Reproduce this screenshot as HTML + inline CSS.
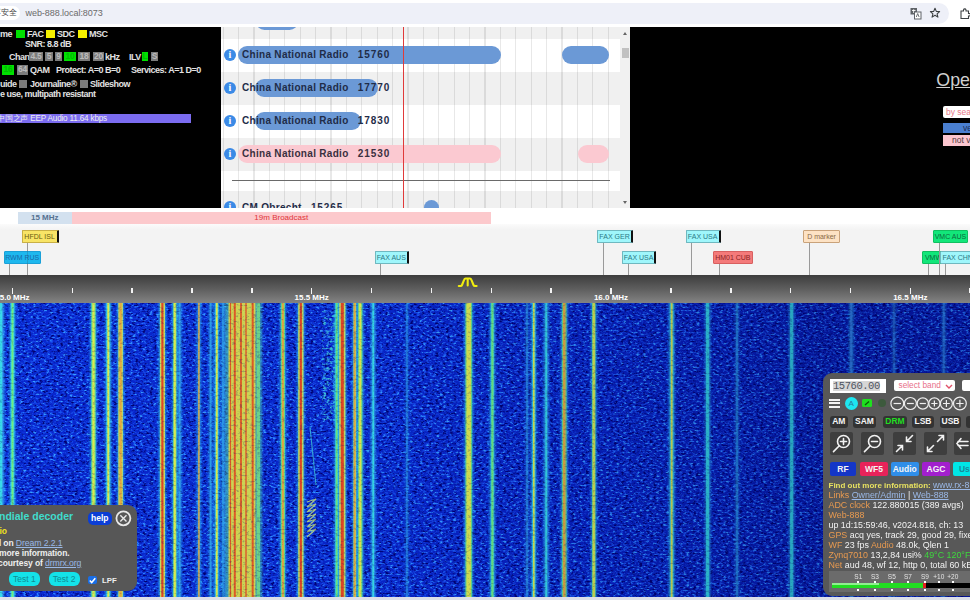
<!DOCTYPE html>
<html><head><meta charset="utf-8">
<style>
*{margin:0;padding:0;box-sizing:border-box}
html,body{width:970px;height:600px;overflow:hidden;background:#000;font-family:"Liberation Sans",sans-serif}
.a{position:absolute}
#top{left:0;top:0;width:970px;height:27px;background:#fff}
#omni{left:-20px;top:2.5px;width:969px;height:21px;background:#eef0f8;border-radius:10.5px}
#chip{left:-14px;top:5.5px;width:34px;height:14.5px;background:#fff;border-radius:7px;font-size:8px;color:#444;line-height:14.5px;text-align:right;padding-right:3.5px;white-space:nowrap}
#url{left:25.5px;top:6px;font-size:9px;color:#6a6a6a;line-height:14px;letter-spacing:-0.05px}
#blk{left:0;top:27px;width:970px;height:181px;background:#000}
.t{color:#e2e2e2;font-weight:bold;font-size:9px;line-height:9.4px;letter-spacing:-0.5px;white-space:nowrap;margin-top:.7px}
.gb{background:#00e000;color:#0b0;font-weight:bold;font-size:8.5px;line-height:9.5px;height:9.5px;letter-spacing:-0.3px}
.yb{background:#f4f000}
.gr{background:#7c7c7c;color:#bbb;font-weight:bold;font-size:8.5px;line-height:9.5px;height:9.5px;letter-spacing:-0.3px}
.c{text-align:center}
.bx{display:inline-block;background:#888;color:#ccc;padding:0 1px}
#sched{left:221px;top:27px;width:409px;height:181px;background:#fff;overflow:hidden}
.gl{top:0;width:1.3px;height:181px;background:rgba(0,0,0,0.09)}
.pl{height:17.5px;border-radius:9px}
.ic{width:12px;height:12px;border-radius:6px;background:#3b8ae6;color:#fff;font:bold 10px/12px "Liberation Serif",serif;text-align:center}
.st{font-size:10px;font-weight:bold;letter-spacing:0.3px;line-height:18.5px;color:#1f2c48;white-space:nowrap}
.lb{height:12.5px;font:7px/12px 'Liberation Sans',sans-serif;text-align:center;white-space:nowrap;overflow:hidden;border-radius:1px}
.rl{top:18.5px;width:60px;text-align:center;color:#fff;font:bold 8px/7px 'Liberation Sans',sans-serif;white-space:nowrap}
.dt{font:bold 8.5px/10px 'Liberation Sans',sans-serif;color:#eee;white-space:nowrap;letter-spacing:-0.1px}
.lk{color:#9ab8e6;text-decoration:underline;font-weight:normal}
.tb{width:31.2px;height:14px;border-radius:6px;background:#14e2e8;color:#128a92;font:8.5px/14px 'Liberation Sans',sans-serif;text-align:center}
.mb{top:416px;height:11.5px;border-radius:3px;background:#333;color:#f4f4f4;font:bold 8.5px/11.5px 'Liberation Sans',sans-serif;text-align:center}
.ib{top:432px;width:23.2px;height:23px;background:#3e3e3e;border-radius:2px}
.ib svg{display:block}
.cb{top:461.8px;height:14px;border-radius:2px;color:#f4f4f4;font:bold 8.5px/14px 'Liberation Sans',sans-serif;text-align:center;overflow:hidden}
.it{left:828.5px;font:8.9px/10px 'Liberation Sans',sans-serif;color:#f2f2f2;white-space:nowrap}
.or{color:#e89a50}
#band{left:0;top:208px;width:970px;height:16px;background:#fff}
#lab{left:0;top:224px;width:970px;height:51px;background:#f3f3f3}
#ruler{left:0;top:275px;width:970px;height:28px;background:linear-gradient(#3d3d3d,#5e5e5e 50%,#838383)}
#wf{left:0;top:303px;width:970px;height:294px;background:#1442d0}
#bot{left:0;top:597px;width:970px;height:3px;background:#dcdfe8}
</style></head><body>
<div id="top" class="a">
  <div id="omni" class="a"></div>
  <div id="chip" class="a">不安全</div>
  <svg class="a" style="left:909px;top:7px" width="14" height="13" viewBox="0 0 14 13"><rect x="1.5" y="1" width="6.5" height="6.5" fill="#5f6368"/><path d="M3 3.5 H6.5 M4.7 2.3 V6" stroke="#fff" stroke-width="0.9"/><rect x="5.5" y="5" width="6.5" height="7" fill="#fff" stroke="#5f6368" stroke-width="1"/><path d="M7.3 10 L8.7 6.5 L10.1 10" fill="none" stroke="#5f6368" stroke-width="0.9"/></svg>
  <svg class="a" style="left:929px;top:7px" width="12" height="12" viewBox="0 0 12 12"><path d="M6 1.3 L7.3 4.4 L10.6 4.6 L8.1 6.8 L8.9 10.1 L6 8.3 L3.1 10.1 L3.9 6.8 L1.4 4.6 L4.7 4.4 Z" fill="none" stroke="#3c4043" stroke-width="1.1" stroke-linejoin="round"/></svg>
  <svg class="a" style="left:959px;top:7px" width="12" height="13" viewBox="0 0 12 13"><path d="M2 4 H4.5 V2.8 A1.3 1.3 0 0 1 7 2.8 V4 H9.5 V6.5 H10.5 A1.3 1.3 0 0 1 10.5 9 H9.5 V11.5 H2 Z" fill="#fff" stroke="#3c4043" stroke-width="1.1"/></svg>
  <div id="url" class="a">web-888.local:8073</div>
</div>
<div id="blk" class="a">
<div class="a" style="left:0;top:0;width:221px;height:181px;overflow:hidden">
 <span class="a t" style="left:0;top:2px">me</span>
 <span class="a gb" style="left:16px;top:2.5px;width:9px;height:8.5px"></span>
 <span class="a t" style="left:27px;top:2px">FAC</span>
 <span class="a yb" style="left:46px;top:2.5px;width:9px;height:8.5px"></span>
 <span class="a t" style="left:57px;top:2px">SDC</span>
 <span class="a yb" style="left:78px;top:2.5px;width:9px;height:8.5px"></span>
 <span class="a t" style="left:89px;top:2px">MSC</span>
 <span class="a t" style="left:25px;top:12.5px">SNR: 8.8 dB</span>
 <span class="a t" style="left:9px;top:25px">Chan</span>
 <span class="a gr c" style="left:29px;top:24.6px;width:14px">4.5</span>
 <span class="a gr c" style="left:45px;top:24.6px;width:8px">5</span>
 <span class="a gr c" style="left:55px;top:24.6px;width:7px">9</span>
 <span class="a gb c" style="left:64px;top:24.6px;width:12px">10</span>
 <span class="a gr c" style="left:78px;top:24.6px;width:12px">18</span>
 <span class="a gr c" style="left:93px;top:24.6px;width:11px">20</span>
 <span class="a t" style="left:105px;top:25px">kHz</span>
 <span class="a t" style="left:129px;top:25px">ILV</span>
 <span class="a gb c" style="left:142px;top:24.6px;width:6px">L</span>
 <span class="a gr c" style="left:151px;top:24.6px;width:7px">S</span>
 <span class="a gb c" style="left:2px;top:38px;width:12px">16</span>
 <span class="a gr c" style="left:17px;top:38px;width:11px">64</span>
 <span class="a t" style="left:30px;top:38.7px">QAM</span>
 <span class="a t" style="left:56px;top:38.7px">Protect: A=0 B=0</span>
 <span class="a t" style="left:131px;top:38.7px">Services: A=1 D=0</span>
 <span class="a t" style="left:0;top:52.5px">uide</span>
 <span class="a gr" style="left:19px;top:53px;width:8px;height:8px"></span>
 <span class="a t" style="left:30px;top:52.5px">Journaline&reg;</span>
 <span class="a gr" style="left:80px;top:53px;width:8px;height:8px"></span>
 <span class="a t" style="left:90px;top:52.5px">Slideshow</span>
 <span class="a t" style="left:0;top:62.7px">e use, multipath resistant</span>
 <div class="a" style="left:0;top:86.5px;width:191px;height:9.5px;background:#7b6cf0"></div>
 <span class="a t" style="left:-3px;top:86.5px;font-weight:normal;color:#eee;font-size:8.2px;letter-spacing:-0.2px;line-height:10px">中国之声 EEP Audio 11.64 kbps</span>
</div>
</div>
<div class="a" style="left:936.3px;top:70.3px;font:17.8px/20px 'Liberation Sans',sans-serif;color:#cfcfcf;text-decoration:underline;white-space:nowrap">OpenWebRX</div>
<div class="a" style="left:943px;top:106px;width:40px;height:12px;background:#fff;border-radius:2px;font:8.5px/12px 'Liberation Sans',sans-serif;color:#e87a8a;padding-left:3px;white-space:nowrap">by sea</div>
<div class="a" style="left:943px;top:122.5px;width:40px;height:10.8px;background:#4a7fd0;font:8.5px/10.8px 'Liberation Sans',sans-serif;color:#1a2a50;padding-left:20px;white-space:nowrap">ve</div>
<div class="a" style="left:943px;top:135.3px;width:40px;height:10.5px;background:#fbc6cf;font:8.5px/10.5px 'Liberation Sans',sans-serif;color:#503a40;padding-left:9px;white-space:nowrap">not v</div>
<div id="sched" class="a">
<div class="a" style="left:0;top:0;width:399px;height:181px;background:#f0f0f0"></div>
<div class="a" style="left:0;top:-21.5px;width:399px;height:33.0px;background:#f0f0f0"></div>
<div class="a" style="left:0;top:11.5px;width:399px;height:33.0px;background:#fff"></div>
<div class="a" style="left:0;top:44.5px;width:399px;height:33.0px;background:#f0f0f0"></div>
<div class="a" style="left:0;top:77.5px;width:399px;height:33.0px;background:#fff"></div>
<div class="a" style="left:0;top:110.5px;width:399px;height:33.0px;background:#f0f0f0"></div>
<div class="a" style="left:0;top:143.5px;width:399px;height:20.5px;background:#fff"></div>
<div class="a" style="left:0;top:164.0px;width:399px;height:33.0px;background:#f0f0f0"></div>
<div class="a gl" style="left:1.6px"></div>
<div class="a gl" style="left:17.0px"></div>
<div class="a gl" style="left:32.4px"></div>
<div class="a gl" style="left:47.8px"></div>
<div class="a gl" style="left:63.2px"></div>
<div class="a gl" style="left:78.6px"></div>
<div class="a gl" style="left:94.0px"></div>
<div class="a gl" style="left:109.4px"></div>
<div class="a gl" style="left:124.8px"></div>
<div class="a gl" style="left:140.2px"></div>
<div class="a gl" style="left:155.6px"></div>
<div class="a gl" style="left:171.0px"></div>
<div class="a gl" style="left:186.4px"></div>
<div class="a gl" style="left:201.8px"></div>
<div class="a gl" style="left:217.2px"></div>
<div class="a gl" style="left:232.6px"></div>
<div class="a gl" style="left:248.0px"></div>
<div class="a gl" style="left:263.4px"></div>
<div class="a gl" style="left:278.8px"></div>
<div class="a gl" style="left:294.2px"></div>
<div class="a gl" style="left:309.6px"></div>
<div class="a gl" style="left:325.0px"></div>
<div class="a gl" style="left:340.4px"></div>
<div class="a gl" style="left:355.8px"></div>
<div class="a gl" style="left:371.2px"></div>
<div class="a gl" style="left:386.6px"></div>
<div class="a pl" style="left:34.5px;top:-14.5px;width:42.0px;background:#6b99d6"></div>
<div class="a pl" style="left:17.0px;top:19.0px;width:263.0px;background:#6b99d6"></div>
<div class="a pl" style="left:341.0px;top:19.0px;width:47.0px;background:#6b99d6"></div>
<div class="a pl" style="left:33.5px;top:52.0px;width:123.5px;background:#6b99d6"></div>
<div class="a pl" style="left:33.5px;top:85.0px;width:106.5px;background:#6b99d6"></div>
<div class="a pl" style="left:17.0px;top:118.0px;width:263.0px;background:#fbc9d1"></div>
<div class="a pl" style="left:357.0px;top:118.0px;width:31.0px;background:#fbc9d1"></div>
<div class="a pl" style="left:203.0px;top:172.5px;width:15.0px;background:#6b99d6"></div>
<div class="a" style="left:11px;top:153px;width:378px;height:1px;background:#6a6a6a"></div>
<div class="a" style="left:181.5px;top:0;width:1.2px;height:181px;background:#e03a3a"></div>
<div class="a ic" style="left:3px;top:21.8px">i</div>
<span class="a st" style="left:21px;top:19.0px">China National Radio&nbsp;&nbsp;&nbsp;<span style="letter-spacing:0.9px">15760</span></span>
<div class="a ic" style="left:3px;top:54.8px">i</div>
<span class="a st" style="left:21px;top:52.0px">China National Radio&nbsp;&nbsp;&nbsp;<span style="letter-spacing:0.9px">17770</span></span>
<div class="a ic" style="left:3px;top:87.8px">i</div>
<span class="a st" style="left:21px;top:85.0px">China National Radio&nbsp;&nbsp;&nbsp;<span style="letter-spacing:0.9px">17830</span></span>
<div class="a ic" style="left:3px;top:120.8px">i</div>
<span class="a st" style="left:21px;top:118.0px;color:#3a3040">China National Radio&nbsp;&nbsp;&nbsp;<span style="letter-spacing:0.9px">21530</span></span>
<div class="a ic" style="left:3px;top:174.3px">i</div>
<span class="a st" style="left:21px;top:171.5px">CM Obrecht&nbsp;&nbsp;&nbsp;<span style="letter-spacing:0.9px">15265</span></span>
<div class="a" style="left:399px;top:0;width:10px;height:181px;background:#f1f1f1"></div>
<div class="a" style="left:400.5px;top:21px;width:7px;height:10px;background:#c1c1c1"></div>
<div class="a" style="left:401.5px;top:5px;width:0;height:0;border-left:2.5px solid transparent;border-right:2.5px solid transparent;border-bottom:3px solid #666"></div>
<div class="a" style="left:401.5px;top:174px;width:0;height:0;border-left:2.5px solid transparent;border-right:2.5px solid transparent;border-top:3px solid #666"></div>
</div>
<div id="band" class="a">
 <div class="a" style="left:18px;top:4px;width:53.5px;height:12px;background:#d3e1ef;color:#55708f;font:bold 8px/12px 'Liberation Sans',sans-serif;text-align:center">15 MHz</div>
 <div class="a" style="left:71.5px;top:4px;width:419.5px;height:12px;background:#fcc9cc;color:#e0343a;font:8px/12px 'Liberation Sans',sans-serif;text-align:center">19m Broadcast</div>
</div>
<div id="lab" class="a">
<div class="a" style="left:0;top:0;width:970px;height:6px;background:linear-gradient(#fbfbfb,#f3f3f3)"></div>
<div class="a" style="left:27.0px;top:18.5px;width:1px;height:32.5px;background:#999"></div>
<div class="a" style="left:602.9px;top:18.5px;width:1px;height:32.5px;background:#999"></div>
<div class="a" style="left:691.2px;top:18.5px;width:1px;height:32.5px;background:#999"></div>
<div class="a" style="left:809.0px;top:18.5px;width:1px;height:32.5px;background:#999"></div>
<div class="a" style="left:938.5px;top:18.5px;width:1px;height:32.5px;background:#999"></div>
<div class="a" style="left:9.0px;top:39.8px;width:1px;height:11.2px;background:#999"></div>
<div class="a" style="left:380.0px;top:39.8px;width:1px;height:11.2px;background:#999"></div>
<div class="a" style="left:627.5px;top:39.8px;width:1px;height:11.2px;background:#999"></div>
<div class="a" style="left:718.5px;top:39.8px;width:1px;height:11.2px;background:#999"></div>
<div class="a" style="left:927.5px;top:39.8px;width:1px;height:11.2px;background:#999"></div>
<div class="a" style="left:945.0px;top:39.8px;width:1px;height:11.2px;background:#999"></div>
<div class="a lb" style="left:21.6px;top:6.2px;width:37.0px;background:#f8e466;color:#6a5c10;border:1px solid #c9b046;border-right:2px solid #111;">HFDL ISL</div>
<div class="a lb" style="left:597.4px;top:6.2px;width:35.3px;background:#9ff6fb;color:#2b7a86;border:1px solid #6fb8c0;border-right:2px solid #111;">FAX GER</div>
<div class="a lb" style="left:685.5px;top:6.2px;width:35.3px;background:#9ff6fb;color:#2b7a86;border:1px solid #6fb8c0;border-right:2px solid #111;">FAX USA</div>
<div class="a lb" style="left:803.4px;top:6.2px;width:36.3px;background:#fde2c4;color:#8a6a44;border:1px solid #c9a27a;">D marker</div>
<div class="a lb" style="left:932.9px;top:6.2px;width:35.1px;background:#12e67a;color:#0b6a3a;border:1px solid #10c060;">VMC AUS</div>
<div class="a lb" style="left:3.7px;top:27.3px;width:37.0px;background:#1eb8ee;color:#1a6aa8;border:1px solid #1aa0d8;">RWM RUS</div>
<div class="a lb" style="left:374.5px;top:27.3px;width:34.5px;background:#9ff6fb;color:#2b7a86;border:1px solid #6fb8c0;border-right:2px solid #111;">FAX AUS</div>
<div class="a lb" style="left:621.9px;top:27.3px;width:34.5px;background:#9ff6fb;color:#2b7a86;border:1px solid #6fb8c0;border-right:2px solid #111;">FAX USA</div>
<div class="a lb" style="left:712.8px;top:27.3px;width:40.1px;background:#f47a7a;color:#8a2424;border:1px solid #d86060;">HM01 CUB</div>
<div class="a lb" style="left:922.0px;top:27.3px;width:23.0px;background:#12e67a;color:#0b6a3a;border:1px solid #10c060;">VMW</div>
<div class="a lb" style="left:940.0px;top:27.3px;width:45.0px;background:#9ff6fb;color:#2b7a86;border:1px solid #6fb8c0;text-align:left;padding-left:1.5px">FAX CHN</div>
<div class="a" style="left:27px;top:39.8px;width:1px;height:11.2px;background:#999"></div>
<div class="a" style="left:27px;top:27.3px;width:1px;height:13px;background:rgba(60,60,60,0.2)"></div>
<div class="a" style="left:938.5px;top:27.3px;width:1px;height:24px;background:#999"></div>
</div>
<div id="ruler" class="a">
<div class="a" style="left:-48.2px;top:13px;width:1.5px;height:5px;background:#f4f4f4"></div>
<div class="a" style="left:11.7px;top:13px;width:1.5px;height:6px;background:#f4f4f4"></div>
<div class="a" style="left:71.5px;top:13px;width:1.5px;height:5px;background:#f4f4f4"></div>
<div class="a" style="left:131.4px;top:13px;width:1.5px;height:5px;background:#f4f4f4"></div>
<div class="a" style="left:191.2px;top:13px;width:1.5px;height:5px;background:#f4f4f4"></div>
<div class="a" style="left:251.1px;top:13px;width:1.5px;height:5px;background:#f4f4f4"></div>
<div class="a" style="left:310.9px;top:13px;width:1.5px;height:6px;background:#f4f4f4"></div>
<div class="a" style="left:370.8px;top:13px;width:1.5px;height:5px;background:#f4f4f4"></div>
<div class="a" style="left:430.7px;top:13px;width:1.5px;height:5px;background:#f4f4f4"></div>
<div class="a" style="left:490.5px;top:13px;width:1.5px;height:5px;background:#f4f4f4"></div>
<div class="a" style="left:550.4px;top:13px;width:1.5px;height:5px;background:#f4f4f4"></div>
<div class="a" style="left:610.2px;top:13px;width:1.5px;height:6px;background:#f4f4f4"></div>
<div class="a" style="left:670.1px;top:13px;width:1.5px;height:5px;background:#f4f4f4"></div>
<div class="a" style="left:730.0px;top:13px;width:1.5px;height:5px;background:#f4f4f4"></div>
<div class="a" style="left:789.8px;top:13px;width:1.5px;height:5px;background:#f4f4f4"></div>
<div class="a" style="left:849.7px;top:13px;width:1.5px;height:5px;background:#f4f4f4"></div>
<div class="a" style="left:909.5px;top:13px;width:1.5px;height:6px;background:#f4f4f4"></div>
<div class="a" style="left:969.4px;top:13px;width:1.5px;height:5px;background:#f4f4f4"></div>
<div class="a rl" style="left:-17.6px">15.0 MHz</div>
<div class="a rl" style="left:281.7px">15.5 MHz</div>
<div class="a rl" style="left:581.0px">16.0 MHz</div>
<div class="a rl" style="left:880.3px">16.5 MHz</div>
<svg class="a" style="left:457px;top:2px" width="21" height="11" viewBox="0 0 21 11"><path d="M1.8 9 H3.6 Q4.6 9 5 8 L7.2 2.6 Q7.6 1.5 8.6 1.5 H12.9 Q13.9 1.5 14.3 2.6 L16.5 8 Q16.9 9 17.9 9 H19.6 M10.7 1.8 V8.4" fill="none" stroke="#f0ec10" stroke-width="2.1" stroke-linejoin="round" stroke-linecap="round"/></svg>
</div>
<div id="wf" class="a">
<svg class="a" style="left:0;top:0" width="970" height="294" viewBox="0 0 970 294">
<defs>
<filter id="nz" x="0" y="0" width="970" height="294" filterUnits="userSpaceOnUse" primitiveUnits="userSpaceOnUse">
<feTurbulence type="fractalNoise" baseFrequency="0.3 0.55" numOctaves="2" seed="7" result="t"/>
<feColorMatrix in="t" type="matrix" values="0 0 0 0 0  0 0 0 0 0  0 0 0 0 0  4.5 0 0 0 -2.1" result="a"/>
<feFlood flood-color="#1e5cf8" result="f"/>
<feComposite in="f" in2="a" operator="in" result="b1"/>
<feColorMatrix in="t" type="matrix" values="0 0 0 0 0  0 0 0 0 0  0 0 0 0 0  8 0 0 0 -5.3" result="a2"/>
<feFlood flood-color="#3aa0ff" result="f2"/>
<feComposite in="f2" in2="a2" operator="in" result="b2"/>
<feMerge><feMergeNode in="b1"/><feMergeNode in="b2"/></feMerge>
</filter>
<filter id="nz2" x="0" y="0" width="970" height="294" filterUnits="userSpaceOnUse" primitiveUnits="userSpaceOnUse">
<feTurbulence type="fractalNoise" baseFrequency="0.28 0.5" numOctaves="2" seed="3" result="t"/>
<feColorMatrix in="t" type="matrix" values="0 0 0 0 0  0 0 0 0 0  0 0 0 0 0  -4.4 0 0 0 2.15" result="a"/>
<feFlood flood-color="#000670" result="f"/>
<feComposite in="f" in2="a" operator="in"/>
</filter>
<filter id="nzm" x="0" y="0" width="970" height="294" filterUnits="userSpaceOnUse" primitiveUnits="userSpaceOnUse">
<feTurbulence type="fractalNoise" baseFrequency="0.15 0.4" numOctaves="2" seed="11" result="t"/>
<feColorMatrix in="t" type="matrix" values="1.8 0 0 0 -0.1  1.8 0 0 0 -0.1  1.8 0 0 0 -0.1  0 0 0 0 1"/>
</filter>
<filter id="bl" x="-5%" y="0" width="110%" height="100%"><feGaussianBlur stdDeviation="1.2 0.3"/></filter>
<filter id="bl2" x="-5%" y="0" width="110%" height="100%"><feGaussianBlur stdDeviation="0.45 0.2"/></filter>
<mask id="lm" maskUnits="userSpaceOnUse" x="0" y="0" width="970" height="294"><rect width="970" height="294" filter="url(#nzm)"/></mask>
<linearGradient id="bg" x1="0" x2="1" y1="0" y2="0">
<stop offset="0" stop-color="#0a28d0"/><stop offset="0.4" stop-color="#0926cc"/><stop offset="0.62" stop-color="#0820c0"/><stop offset="0.85" stop-color="#071ab0"/><stop offset="1" stop-color="#071ab0"/>
</linearGradient>
<linearGradient id="dk" x1="0" x2="1" y1="0" y2="0"><stop offset="0" stop-color="#000850" stop-opacity="0"/><stop offset="0.42" stop-color="#000850" stop-opacity="0.05"/><stop offset="0.65" stop-color="#000850" stop-opacity="0.15"/><stop offset="0.85" stop-color="#000850" stop-opacity="0.28"/><stop offset="1" stop-color="#000850" stop-opacity="0.28"/></linearGradient>
<filter id="nzc" x="322" y="8" width="22" height="110" filterUnits="userSpaceOnUse" primitiveUnits="userSpaceOnUse">
<feTurbulence type="fractalNoise" baseFrequency="0.3 0.4" numOctaves="2" seed="21" result="t"/>
<feColorMatrix in="t" type="matrix" values="0 0 0 0 0  0 0 0 0 0  0 0 0 0 0  4 0 0 0 -2.0" result="a"/>
<feFlood flood-color="#40c8e0" result="f"/>
<feComposite in="f" in2="a" operator="in"/>
</filter>
</defs>
<rect width="970" height="294" fill="url(#bg)"/>
<rect width="970" height="294" filter="url(#nz2)"/>
<rect width="970" height="294" filter="url(#nz)"/>
<rect x="322" y="8" width="22" height="110" filter="url(#nzc)"/>
<g filter="url(#bl)"><rect x="225" y="0" width="37" height="294" fill="#50d8b0" opacity="0.6"/><rect x="-2.2" y="0" width="6.5" height="294" fill="#30c8f0" opacity="0.63"/><rect x="9.6" y="0" width="5.8" height="294" fill="#30c8f0" opacity="0.70"/><rect x="90.2" y="0" width="6.6" height="294" fill="#30c8f0" opacity="0.70"/><rect x="105.3" y="0" width="6.0" height="294" fill="#30c8f0" opacity="0.70"/><rect x="117.2" y="0" width="6.8" height="294" fill="#30c8f0" opacity="0.70"/><rect x="158.7" y="0" width="7.4" height="294" fill="#30c8f0" opacity="0.70"/><rect x="172.0" y="0" width="5.6" height="294" fill="#30c8f0" opacity="0.70"/><rect x="177.4" y="0" width="4.5" height="294" fill="#30c8f0" opacity="0.49"/><rect x="196.5" y="0" width="4.8" height="294" fill="#30c8f0" opacity="0.56"/><rect x="208.3" y="0" width="4.5" height="294" fill="#30c8f0" opacity="0.42"/><rect x="214.1" y="0" width="5.4" height="294" fill="#30c8f0" opacity="0.70"/><rect x="220.8" y="0" width="4.5" height="294" fill="#30c8f0" opacity="0.42"/><rect x="279.7" y="0" width="6.4" height="294" fill="#30c8f0" opacity="0.70"/><rect x="297.0" y="0" width="7.6" height="294" fill="#30c8f0" opacity="0.70"/><rect x="334.1" y="0" width="5.2" height="294" fill="#30c8f0" opacity="0.70"/><rect x="338.0" y="0" width="8.6" height="294" fill="#30c8f0" opacity="0.70"/><rect x="352.3" y="0" width="4.8" height="294" fill="#30c8f0" opacity="0.70"/><rect x="356.9" y="0" width="6.6" height="294" fill="#30c8f0" opacity="0.70"/><rect x="370.8" y="0" width="4.8" height="294" fill="#30c8f0" opacity="0.70"/><rect x="464.2" y="0" width="8.9" height="294" fill="#30c8f0" opacity="0.70"/><rect x="404.8" y="0" width="4.5" height="294" fill="#30c8f0" opacity="0.24"/><rect x="524.8" y="0" width="4.5" height="294" fill="#30c8f0" opacity="0.28"/><rect x="489.6" y="0" width="5.6" height="294" fill="#30c8f0" opacity="0.70"/><rect x="531.1" y="0" width="5.4" height="294" fill="#30c8f0" opacity="0.70"/><rect x="543.7" y="0" width="5.0" height="294" fill="#30c8f0" opacity="0.70"/><rect x="560.8" y="0" width="6.9" height="294" fill="#30c8f0" opacity="0.70"/><rect x="590.9" y="0" width="5.8" height="294" fill="#30c8f0" opacity="0.70"/><rect x="668.7" y="0" width="6.0" height="294" fill="#30c8f0" opacity="0.70"/><rect x="704.9" y="0" width="5.4" height="294" fill="#30c8f0" opacity="0.70"/><rect x="734.7" y="0" width="4.6" height="294" fill="#30c8f0" opacity="0.32"/><rect x="789.0" y="0" width="5.2" height="294" fill="#30c8f0" opacity="0.70"/><rect x="849.0" y="0" width="4.5" height="294" fill="#30c8f0" opacity="0.56"/><rect x="891.8" y="0" width="4.5" height="294" fill="#30c8f0" opacity="0.28"/><rect x="941.5" y="0" width="4.5" height="294" fill="#30c8f0" opacity="0.35"/></g>
<g filter="url(#bl2)"><rect x="228.5" y="0" width="27" height="294" fill="#e4e048" opacity="0.9"/><rect x="233.8" y="0" width="2.0" height="294" fill="#e85020" opacity="0.9"/><rect x="240.1" y="0" width="1.8" height="294" fill="#e85020" opacity="0.9"/><rect x="245.3" y="0" width="1.4" height="294" fill="#e85020" opacity="0.9"/><rect x="251.7" y="0" width="2.0" height="294" fill="#e85020" opacity="0.9"/><rect x="229.9" y="0" width="1.2" height="294" fill="#e85020" opacity="0.9"/><rect x="256.5" y="0" width="3.5" height="294" fill="#80e880" opacity="0.8"/><rect x="-1.1" y="0" width="4.3" height="294" fill="#3a90f0" opacity="0.77"/><rect x="-0.2" y="0" width="2.5" height="294" fill="#38e0e8" opacity="0.9"/><rect x="10.7" y="0" width="3.6" height="294" fill="#38e0e8" opacity="0.85"/><rect x="11.6" y="0" width="1.8" height="294" fill="#70ec80" opacity="1"/><rect x="91.3" y="0" width="4.4" height="294" fill="#70ec80" opacity="0.85"/><rect x="92.4" y="0" width="2.2" height="294" fill="#e0ec50" opacity="1"/><rect x="106.4" y="0" width="3.8" height="294" fill="#38e0e8" opacity="0.85"/><rect x="107.3" y="0" width="2.0" height="294" fill="#e0ec50" opacity="1"/><rect x="118.3" y="0" width="4.6" height="294" fill="#e0ec50" opacity="0.85"/><rect x="119.4" y="0" width="2.4" height="294" fill="#e8b040" opacity="1"/><rect x="159.9" y="0" width="5.1" height="294" fill="#e0ec50" opacity="0.85"/><rect x="161.3" y="0" width="2.2" height="294" fill="#e84a20" opacity="1"/><rect x="173.1" y="0" width="3.4" height="294" fill="#70ec80" opacity="0.85"/><rect x="173.8" y="0" width="2.0" height="294" fill="#e0ec50" opacity="1"/><rect x="178.5" y="0" width="2.4" height="294" fill="#3a90f0" opacity="0.59"/><rect x="178.9" y="0" width="1.5" height="294" fill="#30b8f0" opacity="0.7"/><rect x="197.6" y="0" width="2.7" height="294" fill="#3a90f0" opacity="0.68"/><rect x="198.0" y="0" width="1.8" height="294" fill="#e8b040" opacity="0.8"/><rect x="209.4" y="0" width="2.4" height="294" fill="#3a90f0" opacity="0.51"/><rect x="209.8" y="0" width="1.5" height="294" fill="#30b8f0" opacity="0.6"/><rect x="215.2" y="0" width="3.2" height="294" fill="#38e0e8" opacity="0.85"/><rect x="215.9" y="0" width="1.8" height="294" fill="#e0ec50" opacity="1"/><rect x="221.8" y="0" width="2.4" height="294" fill="#3a90f0" opacity="0.51"/><rect x="222.2" y="0" width="1.5" height="294" fill="#30b8f0" opacity="0.6"/><rect x="280.8" y="0" width="4.2" height="294" fill="#70ec80" opacity="0.85"/><rect x="281.9" y="0" width="2.0" height="294" fill="#e8b040" opacity="1"/><rect x="298.2" y="0" width="5.3" height="294" fill="#e0ec50" opacity="0.85"/><rect x="299.7" y="0" width="2.2" height="294" fill="#e84a20" opacity="1"/><rect x="335.2" y="0" width="3.0" height="294" fill="#38e0e8" opacity="0.85"/><rect x="335.9" y="0" width="1.6" height="294" fill="#70ec80" opacity="1"/><rect x="339.2" y="0" width="6.2" height="294" fill="#e0ec50" opacity="0.85"/><rect x="340.8" y="0" width="3.0" height="294" fill="#e84a20" opacity="1"/><rect x="353.4" y="0" width="2.7" height="294" fill="#e0ec50" opacity="0.85"/><rect x="353.9" y="0" width="1.6" height="294" fill="#e8b040" opacity="1"/><rect x="358.0" y="0" width="4.4" height="294" fill="#70ec80" opacity="0.85"/><rect x="359.1" y="0" width="2.2" height="294" fill="#e0ec50" opacity="1"/><rect x="371.9" y="0" width="2.7" height="294" fill="#3a90f0" opacity="0.85"/><rect x="372.4" y="0" width="1.6" height="294" fill="#38e0e8" opacity="1"/><rect x="465.4" y="0" width="6.7" height="294" fill="#70ec80" opacity="0.85"/><rect x="466.4" y="0" width="4.5" height="294" fill="#e0ec50" opacity="1"/><rect x="405.8" y="0" width="2.4" height="294" fill="#3a90f0" opacity="0.30"/><rect x="406.2" y="0" width="1.5" height="294" fill="#30b8f0" opacity="0.35"/><rect x="525.8" y="0" width="2.4" height="294" fill="#3a90f0" opacity="0.34"/><rect x="526.2" y="0" width="1.5" height="294" fill="#30b8f0" opacity="0.4"/><rect x="490.7" y="0" width="3.4" height="294" fill="#38e0e8" opacity="0.85"/><rect x="491.4" y="0" width="2.0" height="294" fill="#70ec80" opacity="1"/><rect x="532.2" y="0" width="3.2" height="294" fill="#38e0e8" opacity="0.85"/><rect x="533.0" y="0" width="1.6" height="294" fill="#e0ec50" opacity="1"/><rect x="544.8" y="0" width="2.9" height="294" fill="#3a90f0" opacity="0.85"/><rect x="545.3" y="0" width="1.8" height="294" fill="#38e0e8" opacity="1"/><rect x="561.9" y="0" width="4.7" height="294" fill="#70ec80" opacity="0.85"/><rect x="563.0" y="0" width="2.5" height="294" fill="#e8b040" opacity="1"/><rect x="592.0" y="0" width="3.6" height="294" fill="#70ec80" opacity="0.85"/><rect x="592.7" y="0" width="2.2" height="294" fill="#e0ec50" opacity="1"/><rect x="669.8" y="0" width="3.8" height="294" fill="#38e0e8" opacity="0.85"/><rect x="670.8" y="0" width="1.8" height="294" fill="#e0ec50" opacity="1"/><rect x="706.0" y="0" width="3.2" height="294" fill="#38e0e8" opacity="0.85"/><rect x="706.7" y="0" width="1.8" height="294" fill="#38e0e8" opacity="1"/><rect x="735.8" y="0" width="2.5" height="294" fill="#3a90f0" opacity="0.38"/><rect x="736.2" y="0" width="1.6" height="294" fill="#30b8f0" opacity="0.45"/><rect x="790.1" y="0" width="3.1" height="294" fill="#38e0e8" opacity="0.85"/><rect x="790.7" y="0" width="1.8" height="294" fill="#38e0e8" opacity="1"/><rect x="850.1" y="0" width="2.4" height="294" fill="#3a90f0" opacity="0.68"/><rect x="850.5" y="0" width="1.5" height="294" fill="#3a90f0" opacity="0.8"/><rect x="892.8" y="0" width="2.4" height="294" fill="#3a90f0" opacity="0.34"/><rect x="893.2" y="0" width="1.5" height="294" fill="#3a90f0" opacity="0.4"/><rect x="942.5" y="0" width="2.4" height="294" fill="#3a90f0" opacity="0.42"/><rect x="943.0" y="0" width="1.5" height="294" fill="#3a90f0" opacity="0.5"/></g>
<path d="M310 124 L316 182" stroke="#40c8e0" stroke-width="1.2" opacity="0.8"/>
<path d="M307 199 l9 -3 l-9 8 l9 -3 l-9 8 l9 -3 l-9 8 l9 -3 l-9 8 l9 -3 l-9 8 l9 -3 l-9 8 l9 -3 l-9 8" stroke="#c8e880" stroke-width="1.3" fill="none" opacity="0.85"/>
<rect width="970" height="294" filter="url(#nz2)" opacity="0.22"/>
<rect width="970" height="294" fill="url(#dk)"/>
</svg>
</div>
<div id="bot" class="a"></div>
<div id="drm" class="a" style="left:-12px;top:504.6px;width:148.5px;height:86.5px;background:#575757;border-radius:9px"></div>
<div class="a" style="left:-1px;top:510px;font:bold 10.5px/12px 'Liberation Sans',sans-serif;color:#40dccc;white-space:nowrap">ndiale decoder</div>
<div class="a" style="left:87.5px;top:511.6px;width:24.5px;height:13px;border-radius:5px;background:#0b3ed6;color:#fff;font:bold 8.5px/13px 'Liberation Sans',sans-serif;text-align:center">help</div>
<svg class="a" style="left:115px;top:510px" width="17" height="17" viewBox="0 0 17 17"><circle cx="8.4" cy="8.3" r="7" fill="none" stroke="#e8e8e8" stroke-width="1.8"/><path d="M5.3 5.2 L11.5 11.4 M11.5 5.2 L5.3 11.4" stroke="#e8e8e8" stroke-width="1.4"/></svg>
<div class="a dt" style="left:-0.5px;top:525.5px;color:#f0e020">io</div>
<div class="a dt" style="left:-4px;top:537.5px">d on <span class="lk" style="font-size:8.7px">Dream 2.2.1</span></div>
<div class="a dt" style="left:-1px;top:547.5px">more information.</div>
<div class="a dt" style="left:-2px;top:557.7px">courtesy of <span class="lk" style="font-size:8.7px">drmrx.org</span></div>
<div class="a tb" style="left:8.75px;top:572px">Test 1</div>
<div class="a tb" style="left:48.6px;top:572px">Test 2</div>
<div class="a" style="left:88.4px;top:575.8px;width:8.8px;height:8.6px;border-radius:2px;background:#1a6ee6"><svg width="9" height="9" viewBox="0 0 9 9" style="display:block"><path d="M1.8 4.6 L3.7 6.6 L7.3 2.3" fill="none" stroke="#fff" stroke-width="1.5"/></svg></div>
<div class="a" style="left:102px;top:575.5px;font:bold 7.8px/10px 'Liberation Sans',sans-serif;color:#eee">LPF</div>
<div id="ctl" class="a" style="left:823.4px;top:372.6px;width:160px;height:223.5px;background:#585858;border-radius:9px"></div>
<div class="a" style="left:830px;top:379.2px;width:55.6px;height:13.6px;background:#fff"></div>
<div class="a" style="left:832.8px;top:381px;width:47px;height:10px;background:#d6d6d6"></div>
<div class="a" style="left:833px;top:379.5px;font:10.5px/13px 'Liberation Mono',monospace;letter-spacing:-0.45px;color:#4e5460">15760.00</div>
<div class="a" style="left:894px;top:380px;width:60.5px;height:11px;background:#fff;border-radius:2px;font:8.3px/11px 'Liberation Sans',sans-serif;color:#e8708a;padding-left:4.5px;white-space:nowrap">select band</div>
<svg class="a" style="left:944.5px;top:383.5px" width="8" height="5" viewBox="0 0 8 5"><path d="M1 1 L4 4 L7 1" fill="none" stroke="#e05068" stroke-width="1.4"/></svg>
<div class="a" style="left:962px;top:380px;width:10px;height:11px;background:#fff;border-radius:2px"></div>
<div class="a" style="left:828.7px;top:398.6px;width:11px;height:2px;background:#f4f4f4"></div>
<div class="a" style="left:828.7px;top:402.3px;width:11px;height:2px;background:#f4f4f4"></div>
<div class="a" style="left:828.7px;top:406px;width:11px;height:2px;background:#f4f4f4"></div>
<div class="a" style="left:844.7px;top:396.8px;width:13px;height:13px;border-radius:50%;background:#1ee6f0;color:#2a7a9a;font:8px/13px 'Liberation Sans',sans-serif;text-align:center">A</div>
<div class="a" style="left:861.7px;top:398.7px;width:10px;height:8.5px;border-radius:1.5px;background:#1ee01e"><svg width="10" height="9" viewBox="0 0 10 9" style="display:block"><path d="M3 6 L7 2.5" stroke="#0a5a0a" stroke-width="1.3"/></svg></div>
<div class="a" style="left:878px;top:399.3px;width:8px;height:8px;border-radius:50%;background:#3d5a3d"></div>
<svg class="a" style="left:889px;top:395px" width="80" height="17" viewBox="0 0 80 17">
<g fill="none" stroke="#eee" stroke-width="1.2">
<circle cx="8.3" cy="8.5" r="6.4"/><path d="M4.6 8.5 H12"/>
<circle cx="21.4" cy="8.5" r="6"/><path d="M18 8.5 H24.8"/>
<circle cx="33.8" cy="8.5" r="5.6"/><path d="M30.7 8.5 H36.9"/>
<circle cx="45.4" cy="8.5" r="5.6"/><path d="M42.3 8.5 H48.5 M45.4 5.4 V11.6"/>
<circle cx="57.4" cy="8.5" r="6"/><path d="M54 8.5 H60.8 M57.4 5.1 V11.9"/>
<circle cx="70.9" cy="8.5" r="6.4"/><path d="M67.2 8.5 H74.6 M70.9 4.8 V12.2"/>
</g></svg>
<div class="a mb" style="left:830px;width:17.5px">AM</div>
<div class="a mb" style="left:853px;width:23px">SAM</div>
<div class="a mb" style="left:883px;width:24px;color:#22dd22">DRM</div>
<div class="a mb" style="left:912px;width:22px">LSB</div>
<div class="a mb" style="left:940px;width:21px">USB</div>
<div class="a mb" style="left:966px;width:10px"></div>
<div class="a ib" style="left:830px"><svg width="23" height="23" viewBox="0 0 23 23"><g fill="none" stroke="#f2f2f2" stroke-width="1.6" stroke-linecap="round"><circle cx="13.5" cy="9.5" r="6"/><path d="M9.3 13.8 L3.5 19.6 M13.5 6.5 V12.5 M10.5 9.5 H16.5"/></g></svg></div>
<div class="a ib" style="left:861px"><svg width="23" height="23" viewBox="0 0 23 23"><g fill="none" stroke="#f2f2f2" stroke-width="1.6" stroke-linecap="round"><circle cx="13.5" cy="9.5" r="6"/><path d="M9.3 13.8 L3.5 19.6 M10.5 9.5 H16.5"/></g></svg></div>
<div class="a ib" style="left:892.6px"><svg width="23" height="23" viewBox="0 0 23 23"><g fill="none" stroke="#f2f2f2" stroke-width="1.6" stroke-linecap="round"><path d="M19.5 3.5 L13.5 9.5 M13.5 5 V9.5 H18 M3.5 19.5 L9.5 13.5 M5 13.5 H9.5 V18"/></g></svg></div>
<div class="a ib" style="left:923.5px"><svg width="23" height="23" viewBox="0 0 23 23"><g fill="none" stroke="#f2f2f2" stroke-width="1.6" stroke-linecap="round"><path d="M13.5 9.5 L19.5 3.5 M15 3.5 H19.5 V8 M9.5 13.5 L3.5 19.5 M3.5 15 V19.5 H8"/></g></svg></div>
<div class="a ib" style="left:954px"><svg width="23" height="23" viewBox="0 0 23 23"><g fill="none" stroke="#f2f2f2" stroke-width="1.6" stroke-linecap="round"><path d="M14 9.5 H4 M14 13.5 H4 M7 6.5 L3 11.5 L7 16.5"/></g></svg></div>
<div class="a cb" style="left:830px;width:26px;background:#1436c8">RF</div>
<div class="a cb" style="left:860px;width:28px;background:#e8235a">WF5</div>
<div class="a cb" style="left:891px;width:27.5px;background:#2f8ee8">Audio</div>
<div class="a cb" style="left:922px;width:28px;background:#a21fce">AGC</div>
<div class="a cb" style="left:953px;width:26px;background:#00e6e6;color:#1a8a9a">Usr</div>
<div class="a it" style="top:480.4px"><b style="color:#e6e060;font-size:8px">Find out more information: </b><span class="lk">www.rx-888.com</span></div>
<div class="a it" style="top:490.4px"><span class="or">Links</span> <span class="lk">Owner/Admin</span> | <span class="lk">Web-888</span></div>
<div class="a it" style="top:500.4px"><span class="or">ADC clock</span> 122.880015 (389 avgs)</div>
<div class="a it" style="top:510.4px"><span class="or">Web-888</span></div>
<div class="a it" style="top:520.4px">up 1d:15:59:46, v2024.818, ch: 13</div>
<div class="a it" style="top:530.4px"><span class="or">GPS</span> acq yes, track 29, good 29, fixes</div>
<div class="a it" style="top:540.4px"><span class="or">WF</span> 23 fps <span class="or">Audio</span> 48.0k, Qlen 1</div>
<div class="a it" style="top:550.4px"><span class="or">Zynq7010</span> 13,2,84 usi% <span style="color:#3ed83e">49&deg;C 120&deg;F</span></div>
<div class="a it" style="top:560.4px"><span class="or">Net</span> aud 48, wf 12, http 0, total 60 kB/s</div>
<div class="a" style="left:828.5px;top:571.3px;width:150px;height:21.1px;background:#6b6b6b"></div>
<div class="a" style="left:848.3px;top:573.2px;width:20px;text-align:center;font:6.5px/7px 'Liberation Sans',sans-serif;color:#e4e4e4">S1</div>
<div class="a" style="left:864.9px;top:573.2px;width:20px;text-align:center;font:6.5px/7px 'Liberation Sans',sans-serif;color:#e4e4e4">S3</div>
<div class="a" style="left:881.8px;top:573.2px;width:20px;text-align:center;font:6.5px/7px 'Liberation Sans',sans-serif;color:#e4e4e4">S5</div>
<div class="a" style="left:898.0px;top:573.2px;width:20px;text-align:center;font:6.5px/7px 'Liberation Sans',sans-serif;color:#e4e4e4">S7</div>
<div class="a" style="left:914.9px;top:573.2px;width:20px;text-align:center;font:6.5px/7px 'Liberation Sans',sans-serif;color:#e4e4e4">S9</div>
<div class="a" style="left:928.8px;top:573.2px;width:20px;text-align:center;font:6.5px/7px 'Liberation Sans',sans-serif;color:#e4e4e4">+10</div>
<div class="a" style="left:942.8px;top:573.2px;width:20px;text-align:center;font:6.5px/7px 'Liberation Sans',sans-serif;color:#e4e4e4">+20</div>
<div class="a" style="left:831.8px;top:583.3px;width:91.6px;height:5px;background:#22dd22"></div>
<div class="a" style="left:831.8px;top:583.3px;width:47.2px;height:2px;background:#90ee90"></div>
<div class="a" style="left:923.4px;top:583.3px;width:2.6px;height:5px;background:#e02020"></div>
<div class="a" style="left:926px;top:583.3px;width:50px;height:5px;background:#000"></div>
<div class="a" style="left:857.3px;top:581.3px;width:2px;height:2px;background:#fff"></div>
<div class="a" style="left:857.3px;top:588.6px;width:2px;height:2.2px;background:#fff"></div>
<div class="a" style="left:873.9px;top:581.3px;width:2px;height:2px;background:#fff"></div>
<div class="a" style="left:873.9px;top:588.6px;width:2px;height:2.2px;background:#fff"></div>
<div class="a" style="left:890.8px;top:581.3px;width:2px;height:2px;background:#fff"></div>
<div class="a" style="left:890.8px;top:588.6px;width:2px;height:2.2px;background:#fff"></div>
<div class="a" style="left:907.0px;top:581.3px;width:2px;height:2px;background:#fff"></div>
<div class="a" style="left:907.0px;top:588.6px;width:2px;height:2.2px;background:#fff"></div>
<div class="a" style="left:923.9px;top:581.3px;width:2px;height:2px;background:#fff"></div>
<div class="a" style="left:923.9px;top:588.6px;width:2px;height:2.2px;background:#fff"></div>
<div class="a" style="left:937.8px;top:581.3px;width:2px;height:2px;background:#fff"></div>
<div class="a" style="left:937.8px;top:588.6px;width:2px;height:2.2px;background:#fff"></div>
<div class="a" style="left:951.8px;top:581.3px;width:2px;height:2px;background:#fff"></div>
<div class="a" style="left:951.8px;top:588.6px;width:2px;height:2.2px;background:#fff"></div>
</body></html>
